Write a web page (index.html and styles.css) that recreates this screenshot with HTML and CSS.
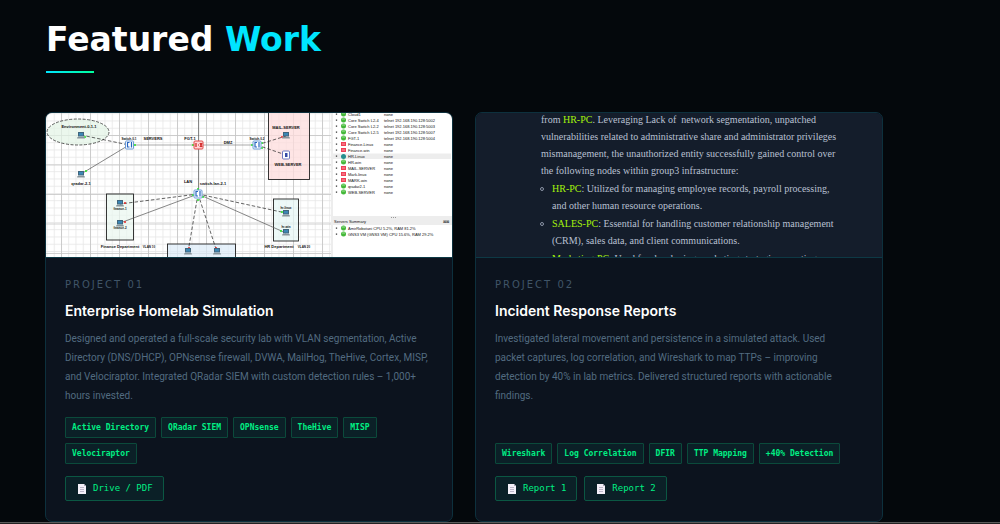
FILE: index.html
```html
<!DOCTYPE html>
<html lang="en">
<head>
<meta charset="utf-8">
<title>Featured Work</title>
<link rel="stylesheet" href="styles.css">
</head>
<body>
<main class="work">
  <h2 class="heading">Featured <span class="accent">Work</span></h2>
  <div class="grid">
    <article class="card">
      <div class="shot">
        <svg class="topology" viewBox="46 113 406 144" preserveAspectRatio="xMidYMid slice" role="img" aria-label="Homelab network topology">
          <defs>
            <pattern id="minor" x="61" y="135" width="7.25" height="7.25" patternUnits="userSpaceOnUse"><path d="M.5 0V7.25M0 .5H7.25" stroke="#e6e6e6" stroke-width=".8"/></pattern>
            <pattern id="major" x="61" y="135" width="29" height="29.5" patternUnits="userSpaceOnUse"><path d="M.5 0V29.5M0 .5H29" stroke="#c4c4c4" stroke-width=".8"/></pattern>
            <g id="pc"><path d="M-3-3H3V1.500H-3Z" fill="#41657c"/><path d="M-2-2H2V.5H-2Z" fill="#3c87b5"/><path d="M-3.500 2H3.500L4 3.500H-4Z" fill="#87949a"/></g>
            <g id="sw"><rect x="-4" y="-4" width="8" height="8" rx="1" fill="#fff" stroke="#6b9bd8"/><path d="M0-2.500H-2V2H0M2-3V2.500" fill="none" stroke="#2865c0" stroke-width="1.200"/></g>
            <g id="on"><circle r="2.500" fill="#45b83a"/><path d="M-1.500-1H1.500" stroke="#b5ecab" stroke-width=".8"/></g>
            <g id="off"><rect x="-2.500" y="-2" width="5" height="4" fill="#ef4056"/><path d="M-1.500 0H1.500" stroke="#ffb3bd" stroke-width=".8"/></g>
          </defs>
          <rect x="46" y="113" width="406" height="145" fill="#fff"/>
          <rect x="46" y="113" width="285" height="145" fill="url(#minor)"/>
          <rect x="46" y="113" width="285" height="145" fill="url(#major)"/>
          <ellipse cx="78" cy="132" rx="31" ry="13" fill="#e2f4e5" fill-opacity=".7" stroke="#333" stroke-width=".8" stroke-dasharray="3 1.500"/>
          <g stroke="#222" stroke-width=".9">
            <rect x="106.500" y="194" width="27" height="46" fill="#e9f7ef" fill-opacity=".7"/>
            <rect x="273.500" y="199" width="25" height="42" fill="#e5f6f5" fill-opacity=".7"/>
            <rect x="167.500" y="244" width="68" height="20" fill="#dcebf8" fill-opacity=".7"/>
            <rect x="268.500" y="108" width="41" height="71.500" fill="#fddcdc" fill-opacity=".75"/>
          </g>
          <g fill="none" stroke="#555" stroke-width=".7">
            <path d="M81 174L129 145M198.500 113V194M198 194L120 223M198 194L286 233"/>
            <path d="M129 145H257" stroke="#888"/>
            <path d="M81 135L129 145M257 145L286 136M257 145L286 155M198 194L120 204M198 194L188 252M198 194L217 252M198 194L286 213" stroke="#222" stroke-dasharray="3.500 2"/>
          </g>
          <g fill="#2ae52a"><circle cx="85" cy="137" r="1"/><circle cx="86" cy="171" r="1"/><circle cx="135" cy="145" r="1"/><circle cx="193" cy="145" r="1"/><circle cx="252" cy="145" r="1"/><circle cx="262" cy="143" r="1"/><circle cx="262" cy="148" r="1"/><circle cx="198" cy="189" r="1"/><circle cx="193" cy="195" r="1"/><circle cx="203" cy="197" r="1"/><circle cx="198" cy="200" r="1"/><circle cx="282" cy="212" r="1"/><circle cx="281" cy="231" r="1"/></g>
          <g fill="#e82a2a"><circle cx="125" cy="203" r="1"/><circle cx="125" cy="222" r="1"/><circle cx="189" cy="248" r="1"/><circle cx="216" cy="248" r="1"/><circle cx="282" cy="137" r="1"/></g>
          <use href="#pc" x="81" y="135"/><use href="#pc" x="81" y="174"/><use href="#pc" x="120" y="203"/><use href="#pc" x="120" y="223"/><use href="#pc" x="188" y="251"/><use href="#pc" x="217" y="251"/><use href="#pc" x="286" y="213"/><use href="#pc" x="286" y="232"/><use href="#pc" x="286" y="135"/>
          <use href="#sw" x="129.500" y="145"/><use href="#sw" x="257" y="145"/><use href="#sw" x="198" y="194"/>
          <rect x="282.500" y="151" width="7" height="8" rx="1" fill="#fff" stroke="#6f78c0"/><rect x="285" y="153" width="2.500" height="4" fill="#3549a5"/>
          <rect x="194" y="141" width="9" height="8" rx="1" fill="#ffd5d5" stroke="#e04949"/><path d="M196 143V147M198 145H199M200 143L202 147M202 143L200 147" stroke="#cf2020" stroke-width="1.200"/>
          <g class="map-label">
            <text x="79" y="128">Environment-0-1-1</text><text x="81" y="185">qradar-2-1</text><text x="153" y="140">SERVERS</text><text x="190" y="140">FGT-1</text><text x="228" y="144">DMZ</text><text x="188" y="183">LAN</text><text x="213" y="185">switch-lan-2-1</text><text x="286" y="129">MAIL-SERVER</text><text x="288" y="166">WEB-SERVER</text><text x="120" y="248">Finance Department</text><text x="279" y="248">HR Department</text>
          </g>
          <g class="map-note"><text x="129" y="140">Switch-0-1</text><text x="257" y="140">Switch-0-2</text><text x="149" y="248">VLAN 10</text><text x="304" y="248">VLAN 20</text><text x="120" y="210">finance-1</text><text x="120" y="229">finance-2</text><text x="286" y="209">hr-linux</text><text x="286" y="228">hr-win</text></g>
          <path d="M331 113H333V257H331ZM333 216H452V225H333ZM333 153.500H451V159H333Z" fill="#ededed"/>
          <path d="M391 217.500H396" stroke="#999" stroke-dasharray="1 1"/>
          <g><use href="#on" x="343.500" y="114"/><use href="#on" x="343.500" y="120"/><use href="#on" x="343.500" y="126"/><use href="#on" x="343.500" y="132"/><use href="#on" x="343.500" y="138"/><use href="#off" x="343.500" y="144"/><use href="#off" x="343.500" y="150"/><circle cx="343.500" cy="156.500" r="2.500" fill="#278e8d"/><use href="#on" x="343.500" y="162"/><use href="#off" x="343.500" y="168"/><use href="#off" x="343.500" y="174"/><use href="#off" x="343.500" y="180"/><use href="#on" x="343.500" y="186"/><use href="#on" x="343.500" y="192"/><use href="#on" x="343.500" y="228"/><use href="#on" x="343.500" y="234"/></g>
          <path d="M336.500 113.500V195M336.500 227.500V236" stroke="#333" stroke-width="1.300" stroke-dasharray="1.300 4.700"/>
          <g class="panel-text">
            <text x="348" y="116">Cloud1</text><text x="384" y="116">none</text>
            <text x="348" y="122">Core Switch L2-4</text><text x="384" y="122">telnet 192.168.190.128:5002</text>
            <text x="348" y="128">Core Switch L2-2</text><text x="384" y="128">telnet 192.168.190.128:5003</text>
            <text x="348" y="134">Core Switch L2-5</text><text x="384" y="134">telnet 192.168.190.128:5007</text>
            <text x="348" y="140">FGT-1</text><text x="384" y="140">telnet 192.168.190.128:5004</text>
            <text x="348" y="146">Finance-Linux</text><text x="384" y="146">none</text>
            <text x="348" y="152">Finance-win</text><text x="384" y="152">none</text>
            <text x="348" y="158">HR-Linux</text><text x="384" y="158">none</text>
            <text x="348" y="164">HR-win</text><text x="384" y="164">none</text>
            <text x="348" y="170">MAIL-SERVER</text><text x="384" y="170">none</text>
            <text x="348" y="176">Mark-linux</text><text x="384" y="176">none</text>
            <text x="348" y="182">MARK-win</text><text x="384" y="182">none</text>
            <text x="348" y="188">qradar2-1</text><text x="384" y="188">none</text>
            <text x="348" y="194">WEB-SERVER</text><text x="384" y="194">none</text>
            <text x="334" y="223">Servers Summary</text><text x="443" y="223">⊠⊠</text>
            <text x="348" y="230">AmirRobotani CPU 5.2%, RAM 81.2%</text>
            <text x="348" y="236">GNS3 VM (GNS3 VM) CPU 15.6%, RAM 29.2%</text>
          </g>
        </svg>
      </div>
      <div class="body">
        <p class="number">PROJECT 01</p>
        <h3 class="title">Enterprise Homelab Simulation</h3>
        <p class="desc">Designed and operated a full-scale security lab with VLAN segmentation, Active<br>Directory (DNS/DHCP), OPNsense firewall, DVWA, MailHog, TheHive, Cortex, MISP,<br>and Velociraptor. Integrated QRadar SIEM with custom detection rules – 1,000+<br>hours invested.</p>
        <ul class="tags"><li>Active Directory</li><li>QRadar SIEM</li><li>OPNsense</li><li>TheHive</li><li>MISP</li><li>Velociraptor</li></ul>
        <div class="links">
          <a class="link" href="#drive"><svg class="page" viewBox="0 0 8 10" aria-hidden="true"><path d="M0 0H6L8 2V10H0Z" fill="#f4eff8"/><path d="M6 0V2H8" fill="#aaa3b5"/><path d="M2 3.500H6M2 5.500H6M2 7.500H6" stroke="#bdb5c8"/></svg>Drive / PDF</a>
        </div>
      </div>
    </article>
    <article class="card">
      <div class="shot report">
        <p>from <mark>HR-PC</mark>. Leveraging Lack of&nbsp; network segmentation, unpatched<br>vulnerabilities related to administrative share and administrator privileges<br>mismanagement, the unauthorized entity successfully gained control over<br>the following nodes within group3 infrastructure:</p>
        <ul>
          <li><mark>HR-PC</mark>: Utilized for managing employee records, payroll processing,<br>and other human resource operations.</li>
          <li><mark>SALES-PC</mark>: Essential for handling customer relationship management<br>(CRM), sales data, and client communications.</li>
          <li><mark>Marketing-PC</mark>: Used for developing marketing strategies, creating</li>
        </ul>
      </div>
      <div class="body">
        <p class="number">PROJECT 02</p>
        <h3 class="title">Incident Response Reports</h3>
        <p class="desc">Investigated lateral movement and persistence in a simulated attack. Used<br>packet captures, log correlation, and Wireshark to map TTPs – improving<br>detection by 40% in lab metrics. Delivered structured reports with actionable<br>findings.</p>
        <ul class="tags"><li>Wireshark</li><li>Log Correlation</li><li>DFIR</li><li>TTP Mapping</li><li>+40% Detection</li></ul>
        <div class="links">
          <a class="link" href="#report-1"><svg class="page" viewBox="0 0 8 10" aria-hidden="true"><path d="M0 0H6L8 2V10H0Z" fill="#f4eff8"/><path d="M6 0V2H8" fill="#aaa3b5"/><path d="M2 3.500H6M2 5.500H6M2 7.500H6" stroke="#bdb5c8"/></svg>Report 1</a>
          <a class="link" href="#report-2"><svg class="page" viewBox="0 0 8 10" aria-hidden="true"><path d="M0 0H6L8 2V10H0Z" fill="#f4eff8"/><path d="M6 0V2H8" fill="#aaa3b5"/><path d="M2 3.500H6M2 5.500H6M2 7.500H6" stroke="#bdb5c8"/></svg>Report 2</a>
        </div>
      </div>
    </article>
  </div>
</main>
<footer class="edge"></footer>
</body>
</html>
```
FILE: styles.css
```css
*, *::before, *::after { box-sizing: border-box; }
body {
  margin: 0;
  background: #04080c;
  color: #fff;
  font-family: Roboto, sans-serif;
}
.work { padding: 20px 117px 0 45px; }
.heading {
  margin: 0 0 39px;
  padding-left: 1px;
  font: 700 33px/40px "DejaVu Sans", sans-serif;
}
.heading::after {
  content: "";
  display: block;
  width: 48px;
  height: 2px;
  margin-top: 11px;
  background: linear-gradient(90deg, #00e5ff, #00ff9d);
}
.accent { color: #00e5ff; }
.grid {
  display: grid;
  grid-template-columns: 1fr 1fr;
  gap: 22px;
}
.card {
  display: flex;
  flex-direction: column;
  min-width: 0;
  overflow: hidden;
  border: 1px solid #0d303d;
  border-radius: 7px;
  background: #0c131e;
}
.shot {
  height: 145px;
  overflow: hidden;
  border-bottom: 1px solid #0d3945;
}
.topology {
  display: block;
  width: 100%;
  height: 100%;
}
.map-label, .map-note {
  font: 700 4px "Liberation Sans", sans-serif;
  text-anchor: middle;
  fill: #111;
}
.map-note { font-size: 3px; }
.panel-text {
  font: 4px "Liberation Sans", sans-serif;
  fill: #111;
}
.report {
  padding-left: 65px;
  background: #141d2b;
  color: #b9c0d2;
  font: 10px/17px "Liberation Serif", serif;
  white-space: nowrap;
}
.report p { margin: -2px 0 1px; }
.report ul {
  margin: 0;
  padding-left: 11px;
  list-style: none;
}
.report li {
  position: relative;
  margin-bottom: 1px;
}
.report li::before {
  content: "";
  position: absolute;
  left: -12px;
  top: 7px;
  width: 4px;
  height: 4px;
  border: 1px solid #8b94a6;
  border-radius: 50%;
}
.report mark {
  background: none;
  color: #a5f20c;
}
.body {
  display: flex;
  flex: 1;
  flex-direction: column;
  padding: 20px 19px;
}
.number {
  margin: 0 0 10px;
  color: #405568;
  font: 10px/14px "DejaVu Sans", sans-serif;
  letter-spacing: 2px;
}
.title {
  margin: 0 0 9px;
  font: 600 14px/18px Inter, sans-serif;
}
.desc {
  flex: 1;
  margin: 0 0 12px;
  color: #526b80;
  font-size: 10px;
  line-height: 19px;
  white-space: nowrap;
}
.tags {
  display: flex;
  flex-wrap: wrap;
  gap: 5px;
  margin: 0 0 12px;
  padding: 0;
  list-style: none;
}
.tags li {
  padding: 0 6px;
  border: 1px solid #0b4a3b;
  border-radius: 1px;
  background: #0b2027;
  color: #00ef84;
  font: 700 8px/19px "DejaVu Sans Mono", monospace;
}
.links {
  display: flex;
  gap: 7px;
}
.link {
  display: flex;
  align-items: center;
  gap: 7px;
  padding: 0 10px 0 12px;
  border: 1px solid #0b5743;
  border-radius: 2px;
  background: #0b2027;
  color: #00ef84;
  font: 9px/23px "DejaVu Sans Mono", monospace;
  text-decoration: none;
}
.page {
  width: 8px;
  height: 10px;
}
.edge {
  height: 3px;
  border-top: 1px solid #5a5a5a;
  background: #222;
}
```
